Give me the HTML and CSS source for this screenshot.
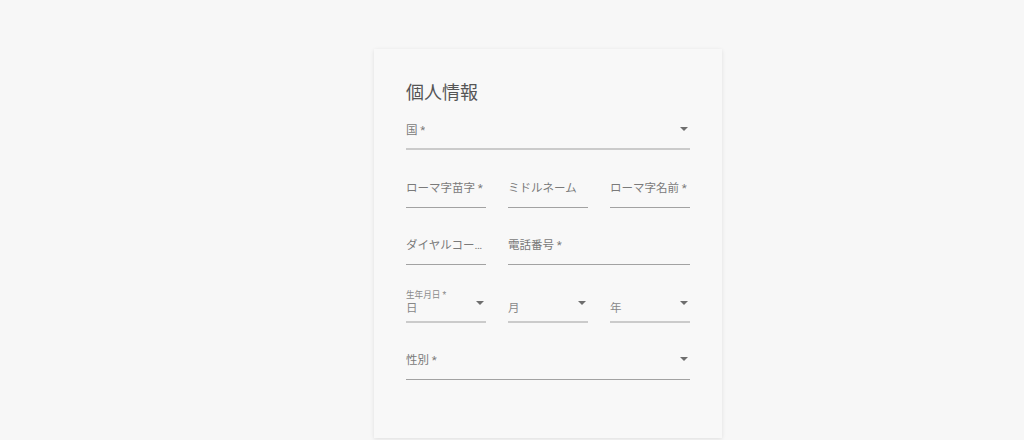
FILE: index.html
```html
<!DOCTYPE html>
<html lang="ja">
<head>
<meta charset="utf-8">
<title>個人情報</title>
<link rel="stylesheet" href="styles.css">
</head>
<body>
<div class="card">
  <h2 class="title">個人情報</h2>
  <div class="form">
    <div class="field select light">
      <span class="label">国 *</span><span class="arrow"></span>
    </div>
    <div class="row">
      <div class="field col"><span class="label">ローマ字苗字 *</span></div>
      <div class="field col"><span class="label">ミドルネーム</span></div>
      <div class="field col"><span class="label">ローマ字名前 *</span></div>
    </div>
    <div class="row">
      <div class="field col"><span class="label">ダイヤルコード *</span></div>
      <div class="field grow"><span class="label">電話番号 *</span></div>
    </div>
    <div class="date-group">
      <div class="legend">生年月日 *</div>
      <div class="row">
        <div class="field col short light"><span class="label">日</span><span class="arrow"></span></div>
        <div class="field col short light"><span class="label">月</span><span class="arrow"></span></div>
        <div class="field col short light"><span class="label">年</span><span class="arrow"></span></div>
      </div>
    </div>
    <div class="field select">
      <span class="label">性別 *</span><span class="arrow"></span>
    </div>
  </div>
</div>
</body>
</html>
```

FILE: styles.css
```css
html, body {
  margin: 0;
  padding: 0;
}
body {
  background: #f7f7f7;
  height: 440px;
  overflow: hidden;
  font-family: Roboto, "Noto Sans CJK JP", "Noto Sans", sans-serif;
}
.card {
  width: 348px;
  box-sizing: border-box;
  margin: 49px 0 0 374px;
  padding: 32px 32px 58px;
  background: #f8f8f8;
  box-shadow: 0 1px 4px rgba(0, 0, 0, 0.1);
}
.title {
  margin: 0 0 17px;
  font-size: 18px;
  line-height: 24px;
  font-weight: 400;
  color: #555;
}
.form {
  display: flex;
  flex-direction: column;
  gap: 29.5px;
}
.row {
  display: flex;
  gap: 22px;
}
.field {
  height: 28px;
  box-sizing: border-box;
  border-bottom: 1px solid #a2a2a2;
  display: flex;
  align-items: flex-start;
  justify-content: space-between;
  min-width: 0;
}
.field.light {
  border-bottom: 2px solid #cbcbcb;
}
.col {
  width: 80px;
  flex: none;
}
.grow {
  flex: 1;
}
.label {
  font-size: 11.5px;
  line-height: 16px;
  color: #7a7a7a;
  white-space: nowrap;
  overflow: hidden;
  text-overflow: ellipsis;
  min-width: 0;
}
.arrow {
  flex: none;
  width: 0;
  height: 0;
  border-left: 4px solid transparent;
  border-right: 4px solid transparent;
  border-top: 4px solid #6e6e6e;
  margin: 5px 2px 0 0;
}
.date-group {
  display: flex;
  flex-direction: column;
}
.legend {
  margin-top: -5px;
  height: 10px;
  font-size: 8.6px;
  line-height: 10px;
  color: #8a8a8a;
  white-space: nowrap;
}
.field.short {
  height: 23px;
}
.field.short .label {
  color: #888;
}
.field.short .arrow {
  margin-top: 1px;
}
```
